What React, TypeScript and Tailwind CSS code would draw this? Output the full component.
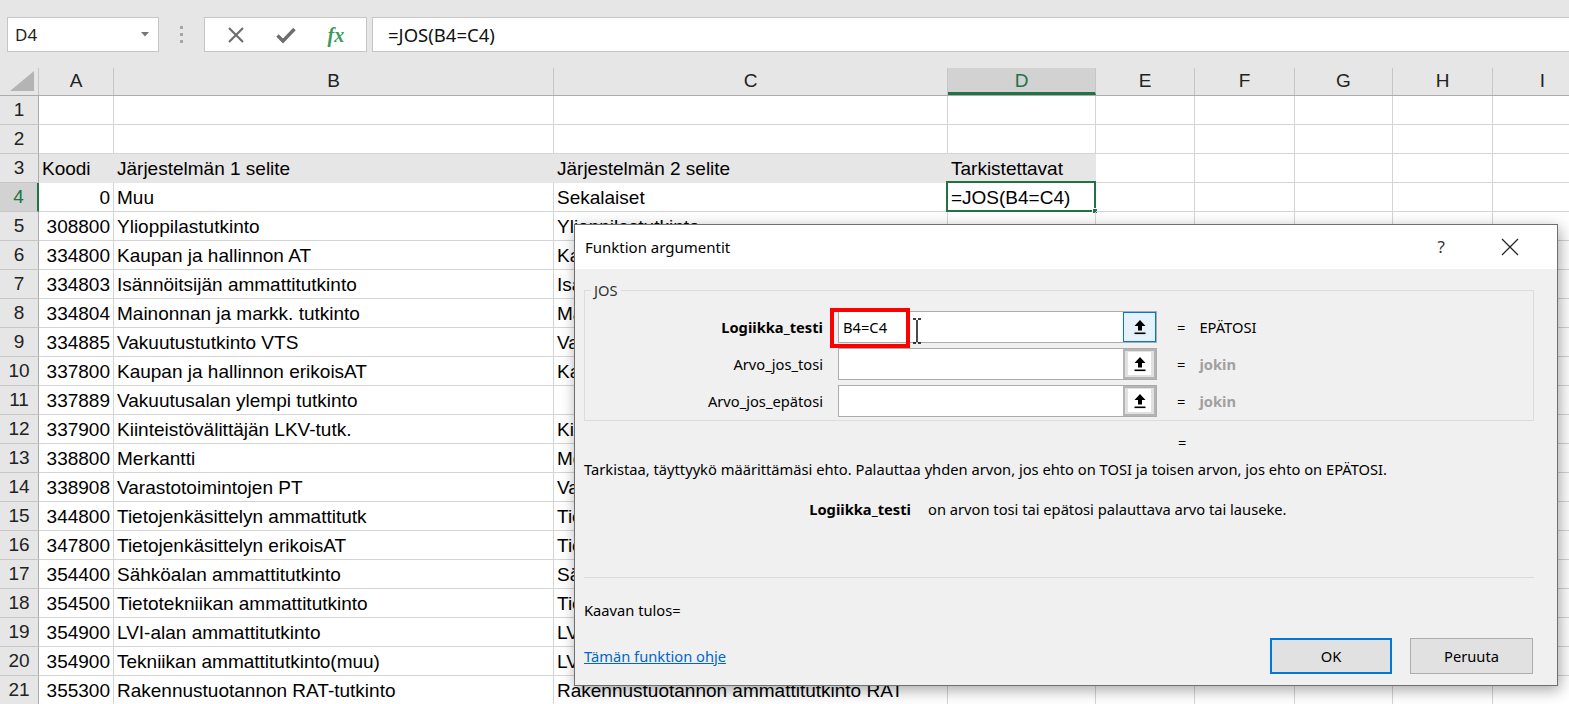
import React from "react";

const cols = [
  { key: "A", w: "w-[75px]" },
  { key: "B", w: "w-[440px]" },
  { key: "C", w: "w-[394px]" },
  { key: "D", w: "w-[148px]" },
  { key: "E", w: "w-[99px]" },
  { key: "F", w: "w-[100px]" },
  { key: "G", w: "w-[98px]" },
  { key: "H", w: "w-[100px]" },
  { key: "I", w: "w-[100px]" },
];

const rows: [string, string, string, string][] = [
  ["", "", "", ""],
  ["", "", "", ""],
  ["Koodi", "Järjestelmän 1 selite", "Järjestelmän 2 selite", "Tarkistettavat"],
  ["0", "Muu", "Sekalaiset", "=JOS(B4=C4)"],
  ["308800", "Ylioppilastutkinto", "Ylioppilastutkinto", ""],
  ["334800", "Kaupan ja hallinnon AT", "Kaupan ja hallinnon ammattitutkinto", ""],
  ["334803", "Isännöitsijän ammattitutkinto", "Isännöitsijän ammattitutkinto", ""],
  ["334804", "Mainonnan ja markk. tutkinto", "Markkinointiviestinnän ammattitutkinto", ""],
  ["334885", "Vakuutustutkinto VTS", "Vakuutusalan ammattitutkinto", ""],
  ["337800", "Kaupan ja hallinnon erikoisAT", "Kaupan erikoisammattitutkinto", ""],
  ["337889", "Vakuutusalan ylempi tutkinto", "", ""],
  ["337900", "Kiinteistövälittäjän LKV-tutk.", "Kiinteistönvälitysalan ammattitutkinto", ""],
  ["338800", "Merkantti", "Merkantti", ""],
  ["338908", "Varastotoimintojen PT", "Varastoalan perustutkinto", ""],
  ["344800", "Tietojenkäsittelyn ammattitutk", "Tieto- ja viestintätekniikan AT", ""],
  ["347800", "Tietojenkäsittelyn erikoisAT", "Tieto- ja viestintätekniikan EAT", ""],
  ["354400", "Sähköalan ammattitutkinto", "Sähkö- ja automaatioalan AT", ""],
  ["354500", "Tietotekniikan ammattitutkinto", "Tieto- ja tietoliikennetekniikan AT", ""],
  ["354900", "LVI-alan ammattitutkinto", "LVI-asentajan ammattitutkinto", ""],
  ["354900", "Tekniikan ammattitutkinto(muu)", "LVI-alan ammattitutkinto", ""],
  ["355300", "Rakennustuotannon RAT-tutkinto", "Rakennustuotannon ammattitutkinto RAT", ""],
];

function RefButton({ active }: { active?: boolean }) {
  return (
    <div
      className={
        active
          ? "w-[33px] h-full border border-[#0078d7] bg-[#e5f1fb] flex items-center justify-center"
          : "w-[33px] h-full border-2 border-[#b4b4b4] bg-[#e1e1e1] flex items-center justify-center"
      }
    >
      <div className={active ? "w-[23px] h-[23px] bg-[#e5f1fb] flex items-center justify-center" : "w-[23px] h-[23px] bg-white flex items-center justify-center"}>
        <svg width="14" height="16" viewBox="0 0 14 16">
          <path d="M7 1 L12.5 7 L9 7 L9 11.5 L5 11.5 L5 7 L1.5 7 Z" fill="#000" />
          <rect x="1.5" y="13.5" width="11" height="1.6" fill="#000" />
        </svg>
      </div>
    </div>
  );
}

export default function App() {
  return (
    <div className="relative w-[1569px] h-[704px] overflow-hidden bg-white font-['Liberation_Sans',sans-serif]">
      {/* formula bar */}
      <div className="h-[68px] bg-[#e6e6e6] flex items-start pt-[17px]">
        <div className="ml-[7px] w-[152px] h-[35px] bg-white border border-[#c6c6c6] flex items-center justify-between pl-[7px] pr-[9px] font-['Noto_Sans',sans-serif] text-[17px] text-[#222]">
          <span>D4</span>
          <svg width="8" height="5" viewBox="0 0 8 5">
            <path d="M0 0 L8 0 L4 4.5 Z" fill="#777" />
          </svg>
        </div>
        <div className="w-[45px] h-[35px] flex flex-col items-center justify-center gap-[4px]">
          <span className="w-[3px] h-[3px] bg-[#a6a6a6]" />
          <span className="w-[3px] h-[3px] bg-[#a6a6a6]" />
          <span className="w-[3px] h-[3px] bg-[#a6a6a6]" />
        </div>
        <div className="w-[163px] h-[35px] bg-white border border-[#c6c6c6] flex items-center justify-around px-[6px]">
          <svg width="18" height="18" viewBox="0 0 18 18">
            <path d="M2 2 L16 16 M16 2 L2 16" stroke="#6e6e6e" strokeWidth="2.2" />
          </svg>
          <svg width="20" height="18" viewBox="0 0 20 18">
            <path d="M1.5 9.5 L7 15 L18.5 3" stroke="#6e6e6e" strokeWidth="3.4" fill="none" />
          </svg>
          <span className="font-['Liberation_Serif',serif] italic font-bold text-[20px] text-[#3d9a5c] leading-none">fx</span>
        </div>
        <div className="ml-[5px] flex-1 h-[35px] bg-white border border-r-0 border-[#c6c6c6] flex items-center pl-[15px] font-['Noto_Sans',sans-serif] text-[18.5px] text-[#111]">
          =JOS(B4=C4)
        </div>
      </div>

      {/* column headers */}
      <div className="h-[28px] flex bg-[#e6e6e6] border-b border-[#ababab] text-[19px] text-[#222]">
        <div className="w-[39px] shrink-0 border-r border-[#c6c6c6] flex items-end justify-end p-[4px]">
          <svg width="24" height="20" viewBox="0 0 24 20">
            <path d="M24 0 L24 20 L0 20 Z" fill="#b4b4b4" />
          </svg>
        </div>
        {cols.map((c) => (
          <div
            key={c.key}
            className={
              c.key === "D"
                ? `${c.w} shrink-0 flex items-center justify-center bg-[#d2d2d2] text-[#217346] border-r border-[#c6c6c6] border-b-[3px] border-b-[#217346] pt-[3px]`
                : `${c.w} shrink-0 flex items-center justify-center border-r border-[#c6c6c6]`
            }
          >
            {c.key}
          </div>
        ))}
      </div>

      {/* rows */}
      {rows.map((r, i) => {
        const n = i + 1;
        const isHead = n === 3;
        const sel = n === 4;
        return (
          <div key={n} className="h-[29px] flex text-[19px] text-black">
            <div
              className={
                sel
                  ? "w-[39px] shrink-0 bg-[#d2d2d2] text-[#217346] border-b border-[#c6c6c6] border-r-2 border-r-[#217346] flex items-center justify-center"
                  : "w-[39px] shrink-0 bg-[#e6e6e6] text-[#222] border-b border-[#c6c6c6] border-r border-r-[#ababab] flex items-center justify-center"
              }
            >
              {n}
            </div>
            {cols.map((c, ci) => {
              const val = ci < 4 ? r[ci] : "";
              const fill = isHead && ci < 4 ? "bg-[#e7e6e6] border-[#e7e6e6]" : "border-[#d4d4d4]";
              const align = ci === 0 && !isHead ? "justify-end" : "justify-start";
              return (
                <div
                  key={c.key}
                  className={`${c.w} shrink-0 relative flex items-center ${align} px-[3px] pt-[2px] border-b border-r ${fill} whitespace-nowrap`}
                >
                  {val}
                  {sel && c.key === "D" && (
                    <div className="absolute left-[-2px] top-[-2px] right-[-1px] bottom-[-1px] border-2 border-[#217346]">
                      <span className="absolute right-[-4px] bottom-[-4px] w-[6px] h-[6px] bg-[#217346] border border-white" />
                    </div>
                  )}
                </div>
              );
            })}
          </div>
        );
      })}

      {/* dialog */}
      <div className="absolute left-[574px] top-[224px] w-[984px] h-[462px] border border-[#6f6f6f] bg-[#f0f0f0] shadow-[2px_4px_14px_rgba(0,0,0,0.35)] flex flex-col font-['Noto_Sans',sans-serif] text-[14.7px] text-black">
        <div className="h-[44px] bg-white flex items-center pl-[10px] pr-[38px] shrink-0">
          <span className="text-[15px] flex-1">Funktion argumentit</span>
          <span className="text-[17px] text-[#333] mr-[56px]">?</span>
          <svg width="18" height="18" viewBox="0 0 18 18">
            <path d="M1 1 L17 17 M17 1 L1 17" stroke="#222" strokeWidth="1.2" />
          </svg>
        </div>

        <div className="flex-1 flex flex-col px-[9px]">
          <fieldset className="mt-[14px] border border-[#dcdcdc] h-[138px] w-[950px]">
            <legend className="ml-[6px] px-[3px] text-[14.7px] text-[#333] leading-none">JOS</legend>
            <div className="flex flex-col gap-[5px] pt-[13px]">
              {[
                { label: "Logiikka_testi", bold: true, value: "B4=C4", res: "EPÄTOSI" },
                { label: "Arvo_jos_tosi", bold: false, value: "", res: "jokin" },
                { label: "Arvo_jos_epätosi", bold: false, value: "", res: "jokin" },
              ].map((f, fi) => (
                <div key={f.label} className="flex items-center h-[32px]">
                  <div className={f.bold ? "w-[238px] text-right font-bold" : "w-[238px] text-right"}>{f.label}</div>
                  <div className="ml-[15px] w-[319px] h-[32px] flex bg-white border border-[#acacac] relative">
                    <div className="flex-1 flex items-center pl-[4px]">{f.value}</div>
                    <RefButton active={fi === 0} />
                    {fi === 0 && (
                      <>
                        <div className="absolute left-[-9px] top-[-4px] w-[80px] h-[40px] border-[4px] border-[#ff0000]" />
                        <svg className="absolute left-[73px] top-[6px]" width="10" height="26" viewBox="0 0 10 26">
                          <path d="M1 1 H4 M6 1 H9 M5 2 V24 M1 25 H4 M6 25 H9" stroke="#000" strokeWidth="1.4" fill="none" />
                        </svg>
                      </>
                    )}
                  </div>
                  <span className="ml-[20px]">=</span>
                  <span className={fi === 0 ? "ml-[14px]" : "ml-[14px] font-bold text-[#a0a0a0]"}>{f.res}</span>
                </div>
              ))}
            </div>
          </fieldset>

          <div className="pl-[594px] mt-[10px] h-[22px] flex items-center">=</div>
          <div className="mt-[5px] h-[22px] flex items-center">
            Tarkistaa, täyttyykö määrittämäsi ehto. Palauttaa yhden arvon, jos ehto on TOSI ja toisen arvon, jos ehto on EPÄTOSI.
          </div>
          <div className="mt-[18px] h-[22px] flex items-center">
            <span className="w-[327px] text-right font-bold">Logiikka_testi</span>
            <span className="ml-[17px]">on arvon tosi tai epätosi palauttava arvo tai lauseke.</span>
          </div>
          <div className="mt-[57px] border-t border-[#dadada] w-[950px]" />
          <div className="mt-[21px] h-[22px] flex items-center">Kaavan tulos=</div>
          <div className="mt-[17px] flex items-center">
            <span className="flex-1 text-[#0066cc] underline">Tämän funktion ohje</span>
            <div className="w-[122px] h-[36px] border-2 border-[#0078d7] bg-[#e1e1e1] flex items-center justify-center">OK</div>
            <div className="ml-[18px] mr-[15px] w-[123px] h-[36px] border border-[#adadad] bg-[#e1e1e1] flex items-center justify-center">Peruuta</div>
          </div>
        </div>
      </div>
    </div>
  );
}
